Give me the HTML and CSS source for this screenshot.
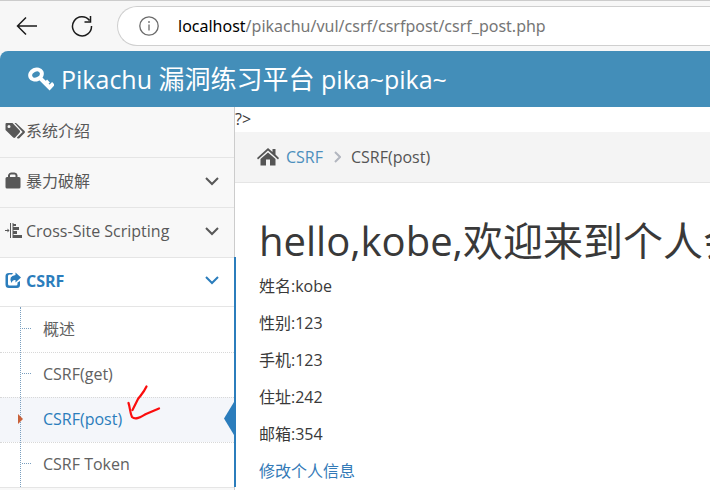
FILE: index.html
```html
<!DOCTYPE html>
<html lang="zh-CN">
<head>
<meta charset="utf-8">
<meta name="viewport" content="width=device-width, initial-scale=1">
<title>Pikachu 漏洞练习平台</title>
<link rel="stylesheet" href="styles.css">
</head>
<body>
<div class="browser-bar">
  <button class="tool" type="button" aria-label="Back">
    <svg width="22" height="22" viewBox="0 0 22 22" class="line"><path d="M21 11H2M10 2.500L1.500 11l8.500 8.500"/></svg>
  </button>
  <button class="tool" type="button" aria-label="Reload">
    <svg width="22" height="22" viewBox="0 0 22 22" class="line"><path d="M20.500 11A9.500 9.500 0 1 1 18.500 5.500M19.500 1v6h-6"/></svg>
  </button>
  <div class="address">
    <svg class="info" width="20" height="20" viewBox="0 0 20 20"><circle cx="10" cy="10" r="9.200"/><path d="M10 8.500v6M10 5v2"/></svg>
    <label for="url">localhost</label>
    <input id="url" type="text" value="/pikachu/vul/csrf/csrfpost/csrf_post.php">
  </div>
</div>
<header class="navbar">
  <svg class="key" width="26" height="24" viewBox="0 0 26 24"><ellipse cx="8" cy="7.500" rx="6" ry="4.800" transform="rotate(-25 8 7.500)"/><path d="M11.500 10.500l11.500 11.500M17.500 17l3-3M21.500 20.500l4-4"/></svg>
  <a class="brand" href="#">Pikachu <span>漏洞练习平台</span> pika~pika~</a>
</header>
<div class="page">
  <nav class="sidebar">
    <ul class="menu">
      <li><a class="item" href="#">
        <svg class="icon" width="20" height="18" viewBox="0 0 20 18"><path fill-rule="evenodd" d="M.5 2Q.5 1 1.500 1h6l7.200 7.500q.8 1 0 2l-4.500 5q-1 .8-2 0L.5 8zM4 3a1.500 1.500 0 1 0 0 3a1.500 1.500 0 1 0 0-3z"/><path d="M9.500 1H11l8.500 8q.9 1 0 2l-5.200 5.200q-1 .8-2 0l-.4-.6 5.700-5.600z"/></svg>
        <span>系统介绍</span></a></li>
      <li><a class="item" href="#">
        <svg class="icon" width="20" height="18" viewBox="0 0 20 18"><path fill-rule="evenodd" d="M3 5V3Q4 .5 6 .5h3.500Q12 .5 12.500 3v2H14q1.500 0 1.500 1.500V15q0 1.500-1.500 1.500H2Q.5 16.500.5 15V6.500Q.5 5 2 5zM5 5h5.500V3.500Q10.500 2.500 9.500 2.500H6Q5 2.500 5 3.500z"/></svg>
        <span>暴力破解</span><svg class="chevron" width="14" height="9" viewBox="0 0 14 9"><path d="M1 1l6 6 6-6"/></svg></a></li>
      <li><a class="item" href="#">
        <svg class="icon" width="20" height="18" viewBox="0 0 20 18"><path d="M0 8h2.500V6.500l2 2-2 2V9H0zM5 1h1v15H5zM7.500 1h1v15h-1zM8 2h3v2H8zM8 5h6v3H8zM8 9h4v3H8zM8 13h9v3H8z"/></svg>
        <span>Cross-Site Scripting</span><svg class="chevron" width="14" height="9" viewBox="0 0 14 9"><path d="M1 1l6 6 6-6"/></svg></a></li>
      <li class="open"><a class="item" href="#">
        <svg class="icon" width="20" height="18" viewBox="0 0 20 18"><path d="M8 1L7 2.500H4.500Q3 2.500 3 4v8q0 1.500 1.500 1.500H11q1.500 0 1.500-1.500v-1.500L15 9v4q0 3-3 3H4q-3.500 0-3.500-3.500V4Q.5 1 4 1z"/><path d="M10.500.500L16 5.500l-5.500 5V8Q7.500 7.500 6.500 11Q3 4 10.500 3z"/></svg>
        <span>CSRF</span><svg class="chevron" width="14" height="9" viewBox="0 0 14 9"><path d="M1 1l6 6 6-6"/></svg></a>
        <ul class="submenu">
          <li><a href="#">概述</a></li>
          <li><a href="#">CSRF(get)</a></li>
          <li class="active"><a href="#" aria-current="page">CSRF(post)</a>
            <svg class="scribble" width="34" height="36" viewBox="0 0 34 36"><path d="M19.500 2.500C17 8 14 11 11 15L5.500 26M1.500 19C3 23 3 29 5 33c4 4 10-1 14-3l13-5.500"/></svg></li>
          <li><a href="#">CSRF Token</a></li>
        </ul>
      </li>
    </ul>
  </nav>
  <main class="content">
    <div class="stray">?&gt;</div>
    <nav class="breadcrumb">
      <svg width="22" height="20" viewBox="0 0 22 20"><path d="M11 1l4.500 4V2h3v5.500L22 11l-1 1.500L11 3.500 1 12.500 0 11z"/><path d="M3.500 12L11 5.500l7.500 6.500v6.500H13v-6H9v6H3.500z"/></svg>
      <a href="#">CSRF</a>
      <svg class="sep" width="7" height="12" viewBox="0 0 7 12"><path d="M1 1l5 5-5 5"/></svg>
      <span>CSRF(post)</span>
    </nav>
    <section class="profile">
      <h1>hello,kobe,欢迎来到个人会员中心</h1>
      <p>姓名:kobe</p>
      <p>性别:123</p>
      <p>手机:123</p>
      <p>住址:242</p>
      <p>邮箱:354</p>
      <p><a href="#">修改个人信息</a></p>
    </section>
  </main>
</div>
</body>
</html>
```
FILE: styles.css
```css
* { box-sizing: border-box; }
body {
  margin: 0;
  min-height: 100vh;
  display: flex;
  flex-direction: column;
  overflow: hidden;
  background: #f7f7f7;
  color: #393939;
  font: 16px/24px "Open Sans", "Noto Sans CJK SC", sans-serif;
}
a { color: #337ab7; text-decoration: none; }
ul { margin: 0; padding: 0; list-style: none; }
svg { flex: none; }

.browser-bar {
  display: flex;
  align-items: center;
  height: 51px;
  padding-left: 16px;
  gap: 33px;
  border-top: 1px solid #ccc;
}
.tool { display: flex; padding: 0; border: 0; background: none; }
.line { fill: none; stroke: #1b1b1b; stroke-width: 1.5; }
.address {
  display: flex;
  flex: 1;
  align-items: center;
  height: 40px;
  margin-left: -9px;
  padding-left: 21px;
  border: 1px solid #cfcfcf;
  border-right: 0;
  border-radius: 20px 0 0 20px;
  background: #fff;
  color: #000;
  font-family: "Noto Sans", sans-serif;
  font-size: 16px;
}
.info { margin-right: 19px; fill: none; stroke: #6b6b6b; stroke-width: 1.3; }
.address input {
  flex: 1;
  min-width: 0;
  padding: 0;
  border: 0;
  outline: 0;
  background: none;
  color: #767676;
  font: inherit;
}

.navbar {
  display: flex;
  align-items: center;
  gap: 7px;
  height: 56px;
  padding-left: 28px;
  border-top-left-radius: 8px;
  background: #438eb9;
}
.key { fill: none; stroke: #fff; stroke-width: 4; }
.brand {
  color: #fff;
  font-size: 25px;
  line-height: 36px;
  white-space: nowrap;
}
.brand span { font-size: 26px; }

.page { display: flex; flex: 1; background: #fff; }
.sidebar {
  flex: none;
  width: 235px;
  border-right: 1px solid #ccc;
  background: #f8f8f8;
}
.menu > li { position: relative; border-bottom: 1px solid #e5e5e5; }
.item {
  display: flex;
  align-items: center;
  gap: 1px;
  height: 49px;
  padding: 0 15px 3px 5px;
  color: #585858;
}
.menu > li:first-child .item { height: 50px; }
.icon { fill: currentColor; }
.chevron { margin-left: auto; fill: none; stroke: currentColor; stroke-width: 2; }
.open { background: #fff; }
.open > .item { height: 48px; color: #2b7dbc; font-weight: 700; }
.open::after {
  content: "";
  position: absolute;
  top: -1px;
  right: -2px;
  bottom: 0;
  width: 2px;
  background: #2b7dbc;
}
.submenu { position: relative; border-top: 1px solid #e5e5e5; }
.submenu::before {
  content: "";
  position: absolute;
  z-index: 1;
  top: 0;
  bottom: 0;
  left: 20px;
  border-left: 1px dotted #7a9fbf;
}
.submenu li { position: relative; border-top: 1px dotted #d8d8d8; }
.submenu li:first-child { border-top-color: transparent; }
.submenu a {
  display: block;
  padding: 9px 0 11px 43px;
  color: #616161;
}
.submenu li::before {
  content: "";
  position: absolute;
  top: 20px;
  left: 22px;
  width: 9px;
  border-top: 1px dotted #7a9fbf;
}
.submenu .active { background: #f4f6fa; }
.submenu .active a { color: #2b7dbc; }
.submenu .active::before {
  z-index: 2;
  top: 16px;
  left: 18px;
  width: 5px;
  height: 10px;
  border: 0;
  background: #c86139;
  clip-path: polygon(0 0, 100% 50%, 0 100%);
}
.submenu .active::after {
  content: "";
  position: absolute;
  top: 4px;
  right: 0;
  width: 10px;
  height: 33px;
  background: #2b7dbc;
  clip-path: polygon(100% 0, 0 50%, 100% 100%);
}
.scribble {
  position: absolute;
  z-index: 3;
  top: -14px;
  left: 127px;
  fill: none;
  stroke: #fb0d0d;
  stroke-width: 2.2;
  stroke-linecap: round;
  stroke-linejoin: round;
}

.content { flex: 1; min-width: 0; overflow: hidden; }
.stray { height: 25px; }
.breadcrumb {
  display: flex;
  align-items: center;
  height: 51px;
  padding-left: 22px;
  border-bottom: 1px solid #e5e5e5;
  background: #f4f4f4;
  color: #555;
}
.breadcrumb svg { margin-right: 7px; fill: #555; }
.breadcrumb a { color: #4c8fbd; }
.breadcrumb .sep { margin: 0 10px 0 11px; fill: none; stroke: #b2b6bf; stroke-width: 2; }
.profile { padding: 32px 24px 0; }
h1 {
  margin: 0 0 7px;
  font-size: 40px;
  font-weight: 400;
  line-height: 52px;
  white-space: nowrap;
}
p { margin: 0 0 12px; line-height: 25px; }
p:last-child { margin: 0; }
```
